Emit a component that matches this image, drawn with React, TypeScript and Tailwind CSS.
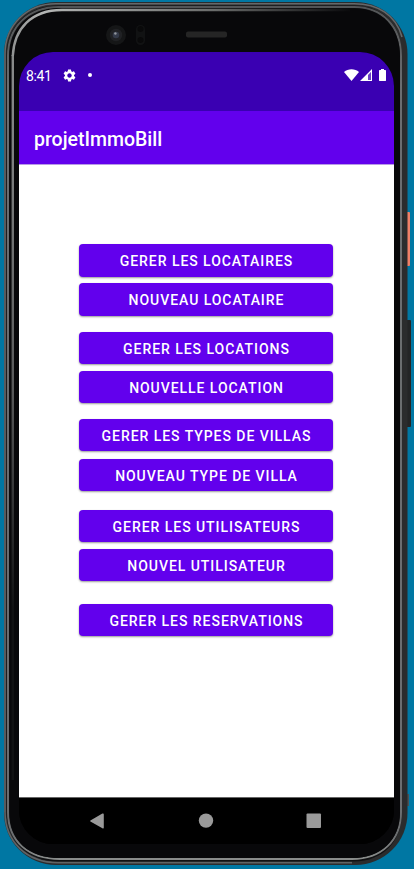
const groups = [
  { items: ["GERER LES LOCATAIRES", "NOUVEAU LOCATAIRE"], style: "mt-[79px] gap-[6.9px]" },
  { items: ["GERER LES LOCATIONS", "NOUVELLE LOCATION"], style: "mt-[15.9px] gap-[6.5px]" },
  { items: ["GERER LES TYPES DE VILLAS", "NOUVEAU TYPE DE VILLA"], style: "mt-[15.7px] gap-[7.2px]" },
  { items: ["GERER LES UTILISATEURS", "NOUVEL UTILISATEUR"], style: "mt-[18.5px] gap-[6.8px]" },
  { items: ["GERER LES RESERVATIONS"], style: "mt-[22.5px]" },
];

function PhoneFrame() {
  return (
    <svg className="absolute inset-0" width="414" height="869" viewBox="0 0 414 869" fill="none">
      <defs>
        <linearGradient id="shine" x1="10" y1="0" x2="350" y2="0" gradientUnits="userSpaceOnUse">
          <stop offset="0" stopColor="#8f9191" />
          <stop offset="0.1" stopColor="#b4b6b5" />
          <stop offset="0.6" stopColor="#6a6c6b" />
          <stop offset="1" stopColor="#0a0a0c" />
        </linearGradient>
        <linearGradient id="side" x1="0" y1="0" x2="0" y2="869" gradientUnits="userSpaceOnUse">
          <stop offset="0" stopColor="#8f9191" />
          <stop offset="0.2" stopColor="#7b7d7d" />
          <stop offset="0.45" stopColor="#58595a" />
          <stop offset="0.7" stopColor="#111213" />
        </linearGradient>
        <linearGradient id="inner" x1="0" y1="0" x2="0" y2="869" gradientUnits="userSpaceOnUse">
          <stop offset="0" stopColor="#505254" />
          <stop offset="0.1" stopColor="#6b6e70" />
          <stop offset="0.96" stopColor="#6b6e70" />
          <stop offset="1" stopColor="#969996" />
        </linearGradient>
      </defs>
      <rect x="406" y="212" width="4" height="54" rx="1" fill="#ef8068" />
      <rect x="406" y="320" width="5" height="107" rx="1" fill="#242526" />
      <rect x="406" y="794" width="3" height="12" fill="#4c5052" />
      <rect x="4" y="2" width="403.5" height="863" rx="52" fill="#2b2c2d" />
      <path d="M5 812V54C5 25 27 3.8 56 3.8H354C378 3.8 396 15 402 37" stroke="#65686a" strokeWidth="1.6" />
      <path d="M5 812C5 842 27 862.6 58 862.6H352" stroke="#606365" strokeWidth="1.6" />
      <path d="M6.5 812V56C6.5 26 28 5.5 58 5.5H354C383 5.5 402 26 402 56V812C402 841 383 861.5 354 861.5H58C28 861.5 6.5 841 6.5 812Z" fill="#101113" />
      <path d="M8 812V56C8 27 28 7 59 7H354C382 7 401 26 401 56V812C401 841 381 859 352 859H60C28 859 8 841 8 812Z" stroke="url(#inner)" strokeWidth="2" />
      <path d="M9.5 812V57C9.5 28 30 8.3 60 8.3H354C381 8.3 400 27 400 57V812C400 840 381 858 352 858H60C29 858 9.5 841 9.5 812Z" fill="#08080a" />
      <path d="M12.8 780V55" stroke="url(#side)" strokeWidth="2.4" />
      <path d="M12.8 56C14 29 31 10 62 10H350" stroke="url(#shine)" strokeWidth="2.4" />
      <circle cx="116" cy="35" r="10" fill="#151617" />
      <circle cx="116" cy="35" r="6.2" fill="#202124" />
      <circle cx="116" cy="35" r="3.3" fill="#343a49" />
      <circle cx="115.4" cy="33.5" r="1.2" fill="#92969d" />
      <rect x="136" y="25" width="9" height="20" rx="4.5" fill="#111213" />
      <circle cx="140.5" cy="29" r="3" fill="#09090a" />
      <circle cx="140.5" cy="40" r="3" fill="#09090a" />
      <rect x="186" y="31.5" width="41" height="6" rx="2" fill="#252525" />
    </svg>
  );
}

function StatusBar() {
  return (
    <div className="flex h-[59px] items-start bg-[#3a00b2] pt-[16px] pr-[7px] pl-[7px] text-white">
      <span className="w-[26px] text-[14px] leading-[16px] tracking-[-0.4px]">8:41</span>
      <svg className="mt-[-0.5px] ml-[10px]" width="15" height="15" viewBox="0 0 24 24" fill="currentColor">
        <path d="M19.14 12.94c.04-.3.06-.61.06-.94 0-.32-.02-.64-.07-.94l2.03-1.58c.18-.14.23-.41.12-.61l-1.92-3.32c-.12-.22-.37-.29-.59-.22l-2.39.96c-.5-.38-1.03-.7-1.62-.94L14.4 2.81c-.04-.24-.24-.41-.48-.41h-3.84c-.24 0-.43.17-.47.41l-.36 2.54c-.59.24-1.13.57-1.62.94l-2.39-.96c-.22-.08-.47 0-.59.22L2.74 8.87c-.12.21-.08.47.12.61l2.03 1.58c-.05.3-.09.63-.09.94s.02.64.07.94l-2.03 1.58c-.18.14-.23.41-.12.61l1.92 3.32c.12.22.37.29.59.22l2.39-.96c.5.38 1.03.7 1.62.94l.36 2.54c.05.24.24.41.48.41h3.84c.24 0 .44-.17.47-.41l.36-2.54c.59-.24 1.13-.56 1.62-.94l2.39.96c.22.08.47 0 .59-.22l1.92-3.32c.12-.22.07-.47-.12-.61l-2.01-1.58zM12 15.6c-1.98 0-3.6-1.62-3.6-3.6s1.62-3.6 3.6-3.6 3.6 1.62 3.6 3.6-1.62 3.6-3.6 3.6z" />
      </svg>
      <span className="mt-[5px] ml-[11px] size-[4px] rounded-full bg-white" />
      <svg className="ml-auto" width="43" height="15" viewBox="0 0 43 15" fill="currentColor">
        <path d="M0 4C4 .4 11 .4 15 4L7.5 13Z" />
        <path fillRule="evenodd" d="M28 1V13H16ZM27 4L24 7V12H27Z" />
        <path d="M24 7L27 4V12H24Z" opacity="0.25" />
        <path d="M37 1H40V2H41.2C41.8 2 42 2.3 42 2.8V12.2C42 12.8 41.8 13 41.2 13H35.8C35.2 13 35 12.8 35 12.2V2.8C35 2.3 35.2 2 35.8 2H37Z" />
      </svg>
    </div>
  );
}

export default function App() {
  return (
    <div className="relative h-[869px] w-[414px] overflow-hidden bg-[#0077a3] pt-[52px] pl-[19px] font-[Roboto,sans-serif]">
      <PhoneFrame />
      <div className="relative flex h-[792px] w-[375px] flex-col overflow-hidden rounded-[34px] bg-black">
        <StatusBar />
        <header className="flex h-[53px] items-center bg-[#6200ed] pt-[4px] pl-[15px] text-[19.5px] font-medium text-white">
          <h1>projetImmoBill</h1>
        </header>
        <main className="flex flex-1 flex-col items-center border-t border-[#b79ae6] bg-white pr-[1px]">
          {groups.map((group) => (
            <div key={group.items[0]} className={`flex flex-col ${group.style}`}>
              {group.items.map((label) => (
                <button
                  key={label}
                  className="h-[32.5px] w-[254px] rounded-[4px] bg-[#6200ed] pt-[2.4px] pl-[1px] text-[14px] font-medium tracking-[0.95px] whitespace-nowrap text-white shadow-[0_1px_2px_rgba(0,0,0,0.4)]"
                >
                  {label}
                </button>
              ))}
            </div>
          ))}
        </main>
        <nav className="flex h-[47px] items-center justify-center border-t border-[#666] bg-black">
          <svg width="375" height="46" viewBox="0 0 375 46" fill="#9a9a9a">
            <path d="M71.4 22.6L83.4 15.6Q84.8 15 84.8 16.5V29.5Q84.8 31 83.4 30.2L71.4 23.6Q70.8 23 71.4 22.6Z" />
            <circle cx="187" cy="22.6" r="7.2" />
            <rect x="287.5" y="15.5" width="14.5" height="14.5" rx="1" />
          </svg>
        </nav>
      </div>
    </div>
  );
}
